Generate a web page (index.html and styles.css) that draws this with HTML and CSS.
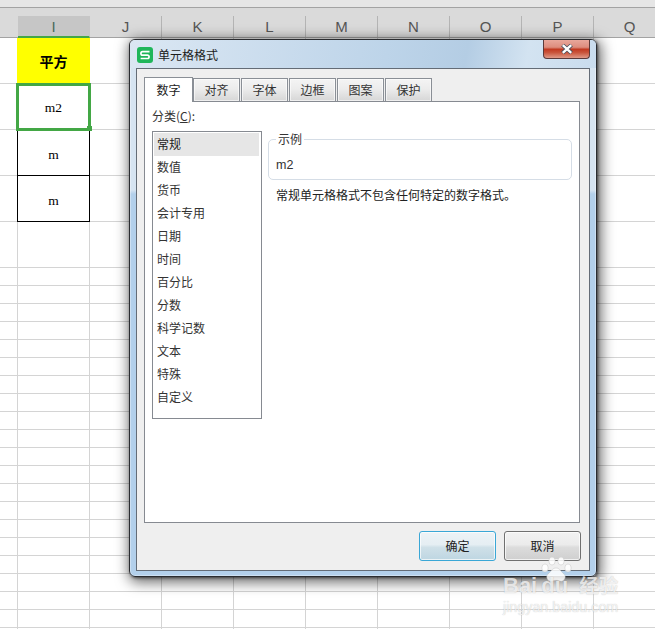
FILE: index.html
```html
<!DOCTYPE html>
<html lang="zh-CN">
<head>
<meta charset="utf-8">
<title>单元格格式</title>
<link rel="stylesheet" href="styles.css">
</head>
<body>
<div class="topstrip"></div>
<div class="colhead">
  <div class="corner"></div>
  <div class="col active">I</div>
  <div class="col">J</div>
  <div class="col">K</div>
  <div class="col">L</div>
  <div class="col">M</div>
  <div class="col">N</div>
  <div class="col">O</div>
  <div class="col">P</div>
  <div class="col">Q</div>
</div>
<div class="sheet">
  <div class="row"><div class="cell yellow">平方</div></div>
  <div class="row"><div class="cell selected">m2<span class="handle"></span></div></div>
  <div class="row"><div class="cell boxed">m</div></div>
  <div class="row"><div class="cell boxed low">m</div></div>
  <div class="row"></div>
  <div class="rest"></div>
</div>

<div class="dialog">
  <div class="titlebar">
    <svg class="appicon" width="16" height="16" viewBox="0 0 16 16">
      <rect width="16" height="16" rx="3" fill="#1fb65a"/>
      <path d="M12.5 4.7H5.6a1.7 1.7 0 0 0 0 3.4h4.8a1.7 1.7 0 0 1 0 3.4H3.6" fill="none" stroke="#fff" stroke-width="1.7"/>
    </svg>
    <span class="title">单元格格式</span>
    <div class="close">
      <svg width="14" height="10" viewBox="0 0 14 10">
        <path d="M2.5 1 L11.5 9 M11.5 1 L2.5 9" stroke="#4a4f5c" stroke-width="4"/>
        <path d="M2.8 1.2 L11.2 8.8 M11.2 1.2 L2.8 8.8" stroke="#fff" stroke-width="2.4"/>
      </svg>
    </div>
  </div>
  <div class="inner">
    <div class="tabs">
      <div class="tab on">数字</div>
      <div class="tab">对齐</div>
      <div class="tab">字体</div>
      <div class="tab">边框</div>
      <div class="tab">图案</div>
      <div class="tab">保护</div>
    </div>
    <div class="panel">
      <div class="left">
        <div class="catlabel">分类(<u>C</u>):</div>
        <div class="list">
          <div class="item on">常规</div>
          <div class="item">数值</div>
          <div class="item">货币</div>
          <div class="item">会计专用</div>
          <div class="item">日期</div>
          <div class="item">时间</div>
          <div class="item">百分比</div>
          <div class="item">分数</div>
          <div class="item">科学记数</div>
          <div class="item">文本</div>
          <div class="item">特殊</div>
          <div class="item">自定义</div>
        </div>
      </div>
      <div class="right">
        <div class="sample">
          <span class="legend">示例</span>
          <span class="sampleval">m2</span>
        </div>
        <p class="desc">常规单元格格式不包含任何特定的数字格式。</p>
      </div>
    </div>
    <div class="buttons">
      <div class="btn primary">确定</div>
      <div class="btn">取消</div>
    </div>
  </div>
</div>

<div class="watermark">
  <svg class="paw" width="32" height="26" viewBox="0 0 32 26">
    <g fill="#fff" fill-opacity=".85" stroke="#bbb" stroke-opacity=".6" stroke-width=".7">
      <ellipse cx="5" cy="11" rx="3.2" ry="4"/>
      <ellipse cx="12" cy="4" rx="3.2" ry="4"/>
      <ellipse cx="21" cy="4" rx="3.2" ry="4"/>
      <ellipse cx="28" cy="11" rx="3.2" ry="4"/>
      <path d="M16 11c-4 0-5 4-8 6-3 3 0 8 4 7 3-1 5-1 8 0 4 1 7-4 4-7-3-2-4-6-8-6z"/>
    </g>
  </svg>
  <div class="wm-main">Bai<span class="wm-du">du</span><span class="wm-cn">经验</span></div>
  <div class="wm-sub">jingyan.baidu.com</div>
</div>
</body>
</html>
```
FILE: styles.css
```css
html, body {
  margin: 0;
  padding: 0;
  width: 655px;
  height: 629px;
  overflow: hidden;
  background: #fff;
  font-family: "Noto Sans CJK SC", "Liberation Sans", sans-serif;
  font-size: 12px;
  color: #333;
}

.topstrip {
  height: 7px;
  background: #e6e6e6;
  border-bottom: 1px solid #a3a3a3;
}

.colhead {
  display: flex;
  align-items: flex-end;
  height: 29px;
  background: #dadada;
  border-bottom: 1px solid #a3a3a3;
}
.corner { width: 18px; flex: none; }
.col {
  box-sizing: border-box;
  flex: none;
  width: 72px;
  height: 21px;
  border-right: 1px solid #b4b4b4;
  text-align: center;
  font: 15px/22px "Liberation Sans", sans-serif;
  color: #555;
}
.col.active {
  background: #c6c6c6;
  border-right-color: #c6c6c6;
  border-bottom: 2px solid #43a745;
  margin-bottom: -1px;
  height: 22px;
  color: #4a6a5a;
}

.sheet {
  height: 591px;
  background-image: linear-gradient(to right, transparent 71px, #d4d4d4 71px);
  background-size: 72px 100%;
  background-position: 18px 0;
}
.row {
  box-sizing: border-box;
  height: 46px;
  padding-left: 17px;
  border-bottom: 1px solid #d4d4d4;
}
.rest {
  height: 361px;
  background-image: linear-gradient(to bottom, transparent 17px, #d4d4d4 17px);
  background-size: 100% 18px;
}
.cell {
  box-sizing: border-box;
  width: 73px;
  height: 46px;
  display: flex;
  align-items: center;
  justify-content: center;
  font: 13.5px "Liberation Serif", serif;
  color: #000;
}
.yellow {
  background: #ff0;
  padding-bottom: 1px;
  font: bold 14px "Noto Sans CJK SC", sans-serif;
}
.boxed {
  padding-top: 4px;
  border: 1px solid #000;
  border-top: 0;
}
.boxed.low { padding-top: 5px; }
.selected {
  position: relative;
  padding-top: 2px;
  background: #fff;
}
.selected::after {
  content: "";
  position: absolute;
  box-sizing: border-box;
  left: -1px;
  top: -1px;
  width: 75px;
  height: 48px;
  border: 3px solid #43a745;
}
.handle {
  position: absolute;
  z-index: 1;
  left: 70px;
  top: 42px;
  width: 5px;
  height: 5px;
  background: #43a745;
}

.dialog {
  position: absolute;
  box-sizing: border-box;
  left: 129px;
  top: 39px;
  width: 468px;
  height: 538px;
  padding: 0 6px 5px;
  display: flex;
  flex-direction: column;
  border: 1px solid #2a2c30;
  border-radius: 6px;
  background: linear-gradient(to bottom, #d6e4f1 0, #d6e4f1 150px, #b3d0eb 154px, #b3d0eb 100%);
  box-shadow: 1px 1px 3px rgba(0, 0, 0, .55), 2px 3px 14px 2px rgba(0, 0, 0, .6), inset 0 0 0 1px rgba(255, 255, 255, .35);
}
.titlebar {
  display: flex;
  align-items: flex-start;
  height: 28px;
  flex: none;
  background: linear-gradient(100deg, #dbe7f3 0, #bdd4e9 55%, #b4cde4 72%, #d3e3f1 85%, #c9dcee 100%);
  margin: 0 -6px;
  padding: 0 6px 0 7px;
  border-radius: 5px 5px 0 0;
}
.appicon { margin-top: 7px; flex: none; }
.title {
  margin: 6px 0 0 5px;
  font-size: 12px;
  line-height: 17px;
  color: #1c1c1c;
}
.close {
  margin-left: auto;
  box-sizing: border-box;
  width: 47px;
  height: 19px;
  display: flex;
  align-items: center;
  justify-content: center;
  border: 1px solid #5b3a3a;
  border-top: 0;
  border-radius: 0 0 4px 4px;
  background: linear-gradient(to bottom, #e9a79b 0, #dd8d7e 40%, #c23a22 52%, #c9553c 70%, #e09a88 100%);
}

.inner {
  box-sizing: border-box;
  flex: 1;
  display: flex;
  flex-direction: column;
  padding: 8px 9px 9px 7px;
  background: #efefef;
  border: 1px solid #646c76;
}
.tabs {
  display: flex;
  align-items: flex-end;
  height: 24px;
  flex: none;
}
.tab {
  box-sizing: border-box;
  width: 47px;
  height: 23px;
  margin-left: 1px;
  text-align: center;
  line-height: 21px;
  border: 1px solid #8a8f96;
  border-bottom: 0;
  background: linear-gradient(to bottom, #f4f4f4 0, #ececec 45%, #d6d6d6 100%);
  box-shadow: inset 0 0 0 1px rgba(255, 255, 255, .6);
}
.tab.on {
  position: relative;
  z-index: 1;
  width: 49px;
  height: 25px;
  margin: 0 -1px -1px 0;
  line-height: 23px;
  background: #fff;
  box-shadow: none;
  color: #222;
}
.panel {
  flex: 1;
  display: flex;
  gap: 6px;
  padding: 0 7px;
  background: #fff;
  border: 1px solid #868a91;
}
.left {
  width: 110px;
  flex: none;
}
.catlabel {
  height: 29px;
  line-height: 28px;
}
.list {
  box-sizing: border-box;
  height: 288px;
  padding: 1px;
  border: 1px solid #868a91;
}
.item {
  width: 105px;
  box-sizing: border-box;
  height: 23px;
  line-height: 22px;
  padding-left: 3px;
}
.item.on {
  background: #e6e6e6;
  color: #222;
}
.right {
  flex: 1;
  padding-top: 37px;
}
.sample {
  position: relative;
  box-sizing: border-box;
  height: 41px;
  padding: 15px 0 0 7px;
  border: 1px solid #d5dde6;
  border-radius: 5px;
  line-height: 18px;
}
.legend {
  position: absolute;
  left: 7px;
  top: -8px;
  padding: 0 2px;
  line-height: 14px;
  background: #fff;
}
.sampleval { font-family: "Liberation Sans", sans-serif; font-size: 12.5px; }
.desc {
  margin: 6px 0 0 8px;
  line-height: 18px;
  color: #222;
}
.buttons {
  display: flex;
  justify-content: flex-end;
  gap: 8px;
  height: 30px;
  flex: none;
  margin-top: 8px;
  margin-right: -1px;
}
.btn {
  box-sizing: border-box;
  width: 77px;
  height: 30px;
  text-align: center;
  line-height: 27px;
  font-size: 12px;
  color: #222;
  border: 1px solid #707070;
  border-radius: 3px;
  background: linear-gradient(to bottom, #f2f2f2 0, #ebebeb 45%, #dcdcdc 55%, #cfcfcf 100%);
  box-shadow: inset 0 0 0 1px rgba(255, 255, 255, .7);
}
.btn.primary {
  border-color: #3aa7d6;
  background: linear-gradient(to bottom, #edf3f6 0, #e5eef3 45%, #cfe0e8 55%, #bed6e2 100%);
}

.watermark {
  position: absolute;
  left: 503px;
  top: 557px;
  width: 120px;
  height: 60px;
  pointer-events: none;
}
.paw {
  position: absolute;
  left: 37px;
  top: 0;
}
.wm-main {
  position: absolute;
  left: 0;
  top: 13px;
  white-space: nowrap;
  font: bold 22px/28px "Liberation Sans", sans-serif;
  color: rgba(255, 255, 255, .75);
  text-shadow: 0 0 1px rgba(0, 0, 0, .25);
}
.wm-du { margin-left: 4px; }
.wm-cn {
  margin-left: 11px;
  font: bold 19.5px "Noto Sans CJK SC", sans-serif;
}
.wm-sub {
  position: absolute;
  left: 0;
  top: 42px;
  font: 14.3px/16px "Liberation Sans", sans-serif;
  white-space: nowrap;
  color: rgba(255, 255, 255, .75);
  text-shadow: 0 0 1px rgba(0, 0, 0, .25);
}
```
